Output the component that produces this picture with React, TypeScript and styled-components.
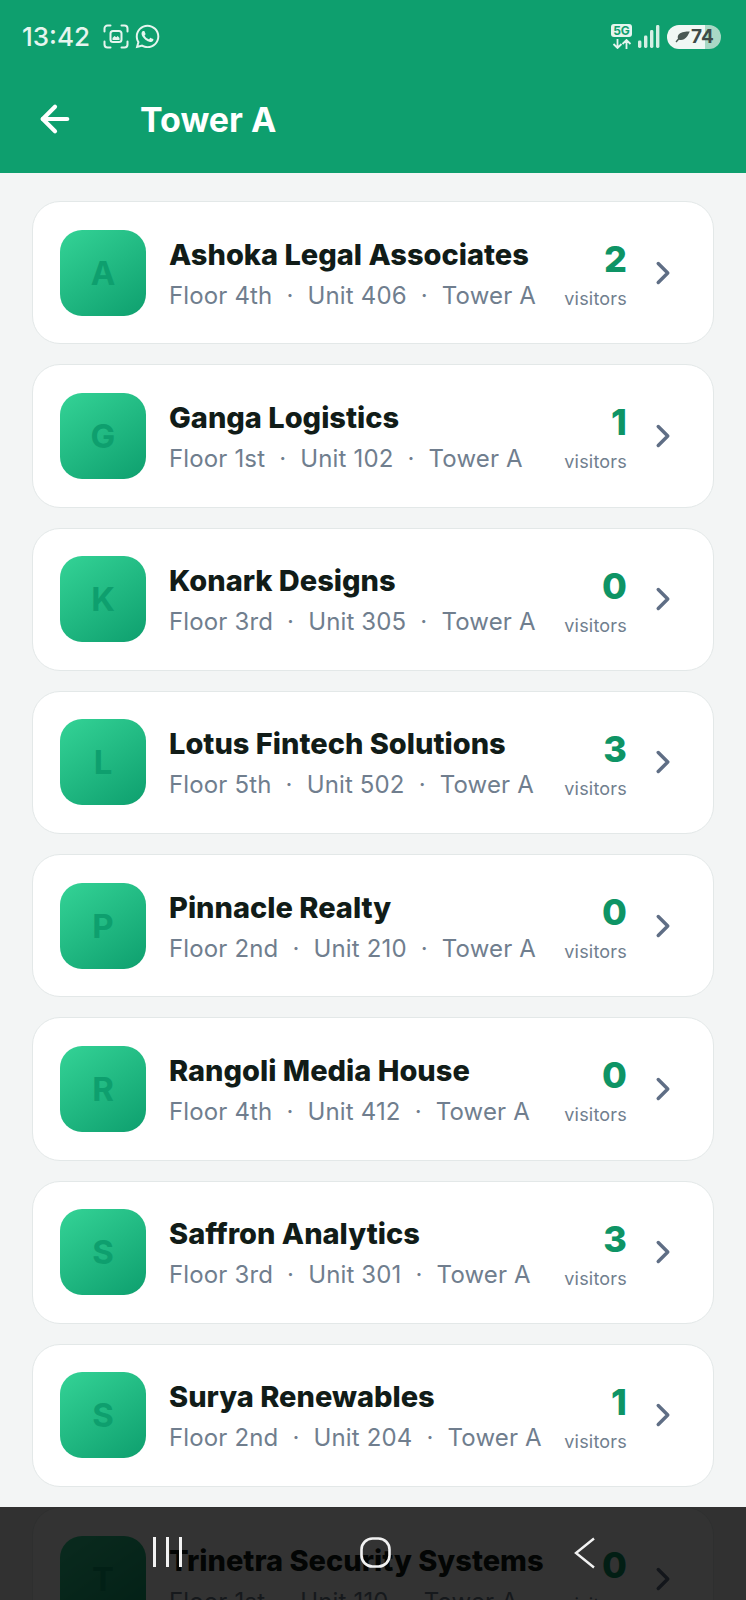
import styled, { createGlobalStyle } from 'styled-components'
import { ArrowLeft, ChevronRight } from 'lucide-react'
import { FaWhatsapp } from 'react-icons/fa'

type Tenant = {
  name: string
  floor: string
  unit: string
  visitors: number
}

const tenants: Tenant[] = [
  { name: 'Ashoka Legal Associates', floor: '4th', unit: '406', visitors: 2 },
  { name: 'Ganga Logistics', floor: '1st', unit: '102', visitors: 1 },
  { name: 'Konark Designs', floor: '3rd', unit: '305', visitors: 0 },
  { name: 'Lotus Fintech Solutions', floor: '5th', unit: '502', visitors: 3 },
  { name: 'Pinnacle Realty', floor: '2nd', unit: '210', visitors: 0 },
  { name: 'Rangoli Media House', floor: '4th', unit: '412', visitors: 0 },
  { name: 'Saffron Analytics', floor: '3rd', unit: '301', visitors: 3 },
  { name: 'Surya Renewables', floor: '2nd', unit: '204', visitors: 1 },
  { name: 'Trinetra Security Systems', floor: '1st', unit: '110', visitors: 0 }
]

const ScreenshotIcon = (): React.JSX.Element => (
  <svg width="26" height="25" viewBox="0 0 26 25" fill="none" stroke="#e6f5ef" strokeWidth="2" strokeLinecap="round">
    <path d="M1.500 7.500V4.500a3 3 0 0 1 3-3h3M18.500 1.500h3a3 3 0 0 1 3 3v3M24.500 17.500v3a3 3 0 0 1-3 3h-3M7.500 23.500h-3a3 3 0 0 1-3-3v-3" />
    <rect x="7.500" y="7" width="11" height="11" rx="2.500" />
    <path d="M9.500 14l2-2 1.800 1.300 1.400-1.300 1.800 2v2H9.500z" fill="#e6f5ef" stroke="none" />
  </svg>
)

const SignalIcon = (): React.JSX.Element => (
  <svg width="22" height="23" viewBox="0 0 22 23" fill="#d5efe4">
    <rect x="0" y="15.500" width="3.400" height="7.500" rx="1.400" />
    <rect x="6" y="10.500" width="3.400" height="12.500" rx="1.400" />
    <rect x="12" y="5" width="3.400" height="18" rx="1.400" />
    <rect x="18" y="0" width="3.400" height="23" rx="1.400" />
  </svg>
)

const TransferIcon = (): React.JSX.Element => (
  <svg width="20" height="10" viewBox="0 0 20 10" fill="none" stroke="#e6f5ef" strokeWidth="1.800">
    <path d="M5.500 0v8.500M1.500 5l4 4 4-4M14.500 10V1.500M10.500 5l4-4 4 4" />
  </svg>
)

const LeafIcon = (): React.JSX.Element => (
  <svg width="15" height="12" viewBox="0 0 15 12" fill="#4a5853">
    <path d="M14.800.5C11 .2 5.500.8 3.500 3.800 2.600 5.200 2.600 6.500 3 7.500L.5 10.500l1 1 2.500-2.800c1.400.7 3.400.5 5-.4 3-1.700 4.300-4.800 5.800-7.800z" />
  </svg>
)

const NavHomeIcon = (): React.JSX.Element => (
  <svg width="31" height="31" viewBox="0 0 31 31" fill="none" stroke="#f2f2f2" strokeWidth="2.600">
    <rect x="1.500" y="1.500" width="28" height="28" rx="11" />
  </svg>
)

const NavBackIcon = (): React.JSX.Element => (
  <svg width="22" height="32" viewBox="0 0 22 32" fill="none" stroke="#f2f2f2" strokeWidth="2.400">
    <path d="M20 1.500L2 16l18 14.500" />
  </svg>
)

const TenantCard = ({ tenant }: { tenant: Tenant }): React.JSX.Element => {
  return (
    <Card>
      <Avatar>{tenant.name[0]}</Avatar>
      <Info>
        <Name>{tenant.name}</Name>
        <Meta>
          <span>Floor {tenant.floor}</span>
          <Dot>·</Dot>
          <span>Unit {tenant.unit}</span>
          <Dot>·</Dot>
          <span>Tower A</span>
        </Meta>
      </Info>
      <Count>
        <CountValue>{tenant.visitors}</CountValue>
        <CountLabel>visitors</CountLabel>
      </Count>
      <Chevron>
        <ChevronRight size={38} strokeWidth={2.2} />
      </Chevron>
    </Card>
  )
}

export default function App(): React.JSX.Element {
  return (
    <Screen>
      <GlobalStyle />
      <Header>
        <StatusBar>
          <StatusLeft>
            <Clock>13:42</Clock>
            <ScreenshotIcon />
            <FaWhatsapp size={27} color="#e6f5ef" />
          </StatusLeft>
          <StatusRight>
            <NetworkBadge>
              <NetworkLabel>5G</NetworkLabel>
              <TransferIcon />
            </NetworkBadge>
            <SignalIcon />
            <Battery>
              <LeafIcon />
              <BatteryLevel>74</BatteryLevel>
            </Battery>
          </StatusRight>
        </StatusBar>
        <TitleBar>
          <BackButton>
            <ArrowLeft size={42} strokeWidth={2.4} />
          </BackButton>
          <Title>Tower A</Title>
        </TitleBar>
      </Header>
      <List>
        {tenants.map((tenant) => (
          <TenantCard key={tenant.name} tenant={tenant} />
        ))}
      </List>
      <NavBar>
        <NavLines>
          <NavLine />
          <NavLine />
          <NavLine />
        </NavLines>
        <NavHomeIcon />
        <NavBack>
          <NavBackIcon />
        </NavBack>
      </NavBar>
    </Screen>
  )
}

const GlobalStyle = createGlobalStyle`
  html, body {
    margin: 0;
    padding: 0;
    background: #f3f5f5;
  }

  * {
    box-sizing: border-box;
  }
`

const Screen = styled.div`
  position: relative;
  width: 746px;
  height: 1600px;
  overflow: hidden;
  background: #f3f5f5;
  font-family: Inter, 'Liberation Sans', sans-serif;
`

const Header = styled.header`
  height: 173px;
  background: #0e9f6e;
  color: #fff;
`

const StatusBar = styled.div`
  height: 72px;
  display: flex;
  align-items: center;
  justify-content: space-between;
  padding: 1px 25px 0 22px;
`

const StatusLeft = styled.div`
  display: flex;
  align-items: center;
  gap: 5px;
`

const Clock = styled.span`
  margin-right: 8px;
  color: #e6f5ef;
  font-size: 26px;
  font-weight: 500;
`

const StatusRight = styled.div`
  display: flex;
  align-items: center;
  gap: 6px;
`

const NetworkBadge = styled.div`
  display: flex;
  flex-direction: column;
  align-items: center;
  gap: 2px;
`

const NetworkLabel = styled.span`
  width: 21px;
  height: 13px;
  border-radius: 3px;
  background: #e6f5ef;
  color: #0e9f6e;
  font-size: 12px;
  font-weight: 700;
  line-height: 13px;
  text-align: center;
`

const Battery = styled.div`
  width: 54px;
  height: 24px;
  margin-left: 1px;
  display: flex;
  align-items: center;
  gap: 1px;
  padding-left: 8px;
  border-radius: 12px;
  background: linear-gradient(to right, #f1f7f4 0 71%, #a9d8c5 71% 100%);
`

const BatteryLevel = styled.span`
  color: #3f4a47;
  font-size: 19px;
  font-weight: 700;
`

const TitleBar = styled.div`
  height: 94px;
  display: flex;
  align-items: center;
  padding-left: 34px;
`

const BackButton = styled.div`
  width: 106px;
  display: flex;
  align-items: center;
`

const Title = styled.h1`
  margin: 0;
  font-size: 34px;
  font-weight: 700;
`

const List = styled.main`
  display: flex;
  flex-direction: column;
  gap: 20px;
  padding: 28px 32px 0;
`

const Card = styled.article`
  flex: none;
  height: 143.25px;
  display: flex;
  align-items: center;
  padding: 0 31px 0 27px;
  border: 1.5px solid #e3e8e8;
  border-radius: 28px;
  background: #fff;
`

const Avatar = styled.div`
  flex: none;
  width: 86px;
  height: 86px;
  margin-right: 23px;
  display: flex;
  align-items: center;
  justify-content: center;
  border-radius: 22px;
  background: linear-gradient(145deg, #34d396, #0e9f6e);
  color: #0e9f6e;
  font-size: 33px;
  font-weight: 700;
`

const Info = styled.div`
  flex: 1;
  min-width: 0;
  display: flex;
  flex-direction: column;
  gap: 9px;
  padding-top: 3px;
`

const Name = styled.div`
  color: #111c18;
  font-size: 29px;
  font-weight: 800;
  line-height: 34px;
  white-space: nowrap;
`

const Meta = styled.div`
  display: flex;
  align-items: center;
  color: #707e8e;
  font-size: 24px;
  letter-spacing: 0.15px;
  line-height: 30px;
  white-space: nowrap;
`

const Dot = styled.span`
  margin: 0 14px;
`

const Count = styled.div`
  flex: none;
  display: flex;
  flex-direction: column;
  align-items: flex-end;
  gap: 7px;
  padding-top: 2px;
  margin-right: 1px;
`

const CountValue = styled.span`
  color: #0e9465;
  font-size: 36px;
  font-weight: 800;
  line-height: 44px;
`

const CountLabel = styled.span`
  color: #707e8e;
  font-size: 18px;
  letter-spacing: 0.2px;
  line-height: 22px;
`

const Chevron = styled.div`
  flex: none;
  width: 38px;
  margin-left: 16px;
  display: flex;
  color: #5f6e85;
`

const NavBar = styled.nav`
  position: absolute;
  left: 0;
  right: 0;
  bottom: 0;
  height: 93px;
  display: flex;
  align-items: flex-start;
  gap: 178px;
  padding: 30px 0 0 153px;
  background: rgba(0, 0, 0, 0.8);
`

const NavLines = styled.div`
  display: flex;
  gap: 10px;
  height: 30px;
`

const NavLine = styled.span`
  width: 3px;
  height: 30px;
  background: #f2f2f2;
`

const NavBack = styled.div`
  margin-left: 5px;
  display: flex;
`
